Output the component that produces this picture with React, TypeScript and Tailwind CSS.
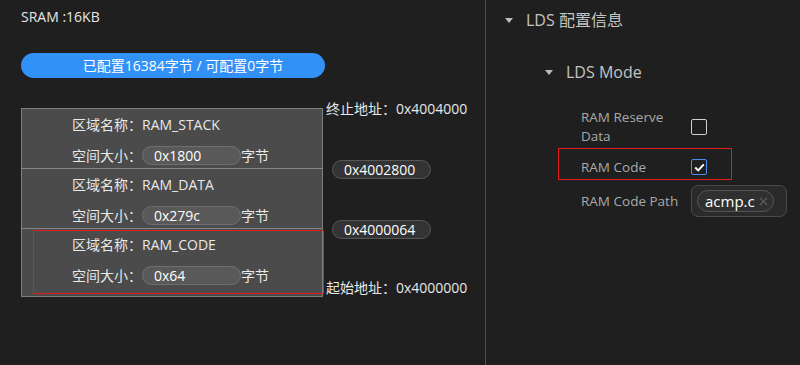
import React from "react";

const font = { fontFamily: '"Open Sans", "Noto Sans CJK SC", sans-serif' };

const regions = [
  { name: "RAM_STACK", size: "0x1800" },
  { name: "RAM_DATA", size: "0x279c" },
  { name: "RAM_CODE", size: "0x64" },
];

function Caret() {
  return (
    <svg width="8" height="5" viewBox="0 0 8 5" className="shrink-0">
      <path d="M0 0 L8 0 L4 5 Z" fill="#bdbdbd" />
    </svg>
  );
}

function RegionRow({ name, size, last }: { name: string; size: string; last: boolean }) {
  return (
    <div
      className={`h-[60px] pl-[50px] pt-[6px] ${last ? "" : "border-b border-[#858585]"}`}
    >
      <div className="h-[20px] leading-[20px] text-[14px] text-[#e8e8e8]">
        区域名称：{name}
      </div>
      <div className="mt-[10px] flex h-[20px] items-center text-[14px] text-[#e8e8e8]">
        <span>空间大小：</span>
        <div className="flex h-[19px] w-[99px] items-center rounded-full border border-[#6f6f6f] bg-[#595959] pl-[11px] text-white">
          {size}
        </div>
        <span>字节</span>
      </div>
    </div>
  );
}

function AddressPill({ value, mt }: { value: string; mt: string }) {
  return (
    <div
      className={`${mt} ml-[6px] flex h-[19px] w-[99px] items-center rounded-full border border-[#575757] bg-[#333333] pl-[11px] text-[14px] text-white`}
    >
      {value}
    </div>
  );
}

function Checkbox({ checked }: { checked?: boolean }) {
  if (checked) {
    return (
      <div className="flex h-[16px] w-[16px] items-center justify-center rounded-[2px] border border-[#4c8ef2] bg-[#1f1f1f]">
        <svg width="11" height="9" viewBox="0 0 11 9">
          <path d="M1.2 4.6 L4.2 7.4 L9.8 1.4" stroke="#ffffff" strokeWidth="2" fill="none" />
        </svg>
      </div>
    );
  }
  return <div className="h-[16px] w-[16px] rounded-[2px] border-[1.5px] border-[#d0d0d0]" />;
}

export default function App() {
  return (
    <div className="flex h-[365px] w-[800px] bg-[#1f1f1f]" style={font}>
      {/* left: memory layout */}
      <div className="h-full w-[486px] border-r border-[#505050] pl-[21px] pt-[8px]">
        <div className="h-[18px] text-[14px] leading-[18px] text-[#e6e6e6]">SRAM :16KB</div>
        <div className="mt-[27px] flex h-[25px] w-[304px] items-center justify-center rounded-full bg-[#3291f7] pl-[20px] text-[14px] text-white">
          已配置16384字节 / 可配置0字节
        </div>

        <div className="mt-[30px] flex">
          <div className="relative w-[302px] border border-[#7e7e7e] bg-[#4b4b4b]">
            {regions.map((r, i) => (
              <RegionRow key={r.name} name={r.name} size={r.size} last={i === regions.length - 1} />
            ))}
            {/* selection highlight */}
            <div className="absolute left-[11px] top-[121px] h-[64px] w-[291px] border border-[#e51c1c]" />
          </div>

          <div className="ml-[3px] flex flex-col">
            <div className="-mt-[8px] h-[18px] text-[14px] leading-[18px] text-[#e8e8e8]">
              终止地址：0x4004000
            </div>
            <AddressPill value="0x4002800" mt="mt-[42px]" />
            <AddressPill value="0x4000064" mt="mt-[41px]" />
            <div className="mt-[40px] h-[18px] text-[14px] leading-[18px] text-[#e8e8e8]">
              起始地址：0x4000000
            </div>
          </div>
        </div>
      </div>

      {/* right: LDS config */}
      <div className="relative flex-1 pl-[19px] pt-[10px]">
        <div className="flex h-[20px] items-center gap-[13px] text-[16px] text-[#c4c4c4]">
          <Caret />
          <span>LDS 配置信息</span>
        </div>
        <div className="mt-[32px] flex h-[20px] items-center gap-[13px] pl-[40px] text-[16px] text-[#c4c4c4]">
          <Caret />
          <span>LDS Mode</span>
        </div>

        <div className="mt-[26px] pl-[76px] text-[13.5px] text-[#a9a9a9]">
          <div className="flex h-[38px] items-center">
            <div className="w-[110px] pr-[20px] leading-[19px]">RAM Reserve Data</div>
            <Checkbox />
          </div>
          <div className="mt-[6px] flex h-[30px] items-center">
            <div className="w-[110px]">RAM Code</div>
            <Checkbox checked />
          </div>
          <div className="mt-[3px] flex items-center">
            <div className="w-[110px]">RAM Code Path</div>
            <div className="flex h-[32px] w-[96px] items-center rounded-[7px] border border-[#4a4a4a] bg-[#2a2a2a] pl-[5px]">
              <div className="flex h-[22px] items-center gap-[4px] rounded-full border border-[#555555] bg-[#303030] pl-[7px] pr-[5px]">
                <span className="text-[15px] text-white">acmp.c</span>
                <svg width="9" height="9" viewBox="0 0 9 9">
                  <path d="M1 1 L8 8 M8 1 L1 8" stroke="#5e5e5e" strokeWidth="1.2" />
                </svg>
              </div>
            </div>
          </div>
        </div>

        {/* selection highlight */}
        <div className="absolute left-[72px] top-[148px] h-[32px] w-[174px] border border-[#e51c1c]" />
      </div>
    </div>
  );
}
